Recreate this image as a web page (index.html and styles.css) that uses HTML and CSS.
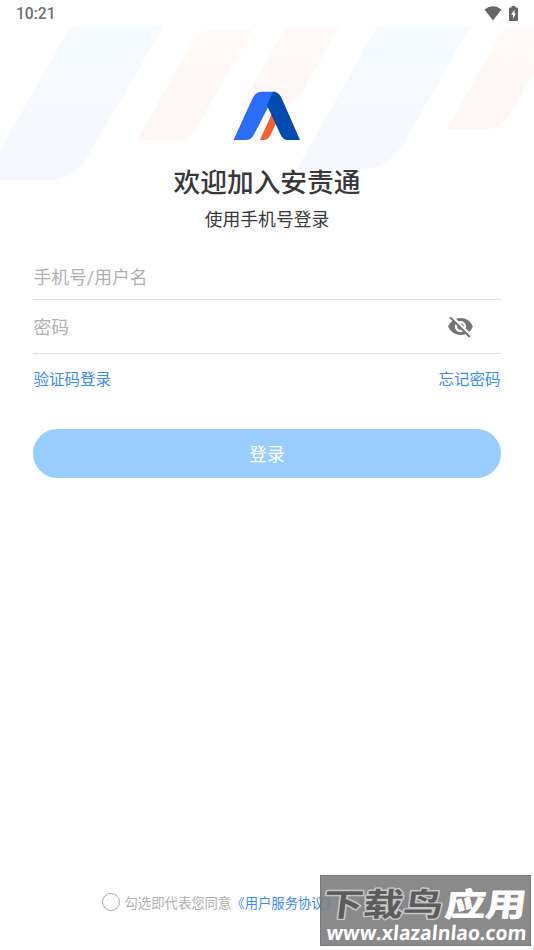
FILE: index.html
```html
<!DOCTYPE html>
<html lang="zh-CN">
<head>
<meta charset="utf-8">
<title>登录</title>
<link rel="stylesheet" href="styles.css">
</head>
<body>
<div class="screen">
  <svg class="backdrop" viewBox="0 0 534 190" aria-hidden="true">
    <defs>
      <linearGradient id="blue" x1="0" y1="0" x2="0" y2="1"><stop offset="0" stop-color="#f6fbff"/><stop offset=".45" stop-color="#f6faff"/><stop offset="1" stop-color="#f5f8ff"/></linearGradient>
      <linearGradient id="peach" x1="0" y1="0" x2="0" y2="1"><stop offset="0" stop-color="#fffaf7"/><stop offset="1" stop-color="#fff6f5"/></linearGradient>
    </defs>
    <path fill="url(#blue)" d="M70 27H163L88 156Q73 180 50 180H0V150Z"/>
    <path fill="url(#peach)" d="M213 30H252L198 126Q190 140 175 140H137L192 43Q199 30 213 30Z"/>
    <path fill="url(#peach)" d="M286 27H339L303 91Q294 107 279 107H240Z"/>
    <path fill="url(#blue)" d="M377 27H470L403 144Q388 169 360 169H297Z"/>
    <path fill="url(#peach)" d="M505 27H534V73L509 116Q502 129 484 129H447Z"/>
  </svg>

  <header class="status">
    <span class="clock">10:21</span>
    <span class="indicators">
      <svg width="18" height="15" viewBox="0 0 18 15"><path fill="#666" d="M.5 3.500Q9-3.200 17.500 3.500L9 14.400Z"/></svg>
      <svg width="9" height="16" viewBox="0 0 9 16"><path fill="#666" d="M2.600 0h3.800v1.600H8a1 1 0 0 1 1 1V14a1 1 0 0 1-1 1H1a1 1 0 0 1-1-1V2.600a1 1 0 0 1 1-1h1.600Z"/><path fill="#fff" d="M5.400 3.600 2.200 8.700H4v4l2.900-5.300H5.400Z"/></svg>
    </span>
  </header>

  <main class="login">
    <svg class="logo" width="68" height="50" viewBox="0 0 68 50">
      <path fill="#f55f2d" d="M47 24 37.500 44Q35 49 30.500 49H27L40 20Z"/>
      <path fill="#296dfa" d="M.5 49 19 8.500Q22.300 .8 29 .8H43L21 43.500Q18.500 49 12 49Z"/>
      <path fill="#024bb0" d="M40 .8Q46 .8 49 8L67 49H55Q50 49 47.500 43.500L34 14.500 40 .8Z"/>
    </svg>
    <h1 class="title">欢迎加入安责通</h1>
    <p class="subtitle">使用手机号登录</p>

    <form class="form">
      <div class="field field-user"><span class="placeholder">手机号/用户名</span></div>
      <div class="field field-password">
        <span class="placeholder">密码</span>
        <svg class="eye" width="27" height="27" viewBox="0 0 24 24"><path fill="#757575" d="M12 7c2.760 0 5 2.240 5 5 0 .65-.13 1.260-.36 1.830l2.920 2.920c1.510-1.260 2.700-2.890 3.430-4.750-1.730-4.390-6-7.500-11-7.500-1.400 0-2.740.25-3.980.7l2.160 2.160C10.740 7.130 11.350 7 12 7zM2 4.270l2.280 2.280.46.46C3.080 8.300 1.780 10.020 1 12c1.730 4.390 6 7.500 11 7.500 1.550 0 3.030-.3 4.380-.84l.42.42L19.730 22 21 20.730 3.270 3 2 4.270zM7.530 9.800l1.550 1.550c-.05.21-.08.43-.08.65 0 1.660 1.340 3 3 3 .22 0 .44-.03.65-.08l1.550 1.550c-.67.33-1.410.53-2.200.53-2.760 0-5-2.240-5-5 0-.79.2-1.530.53-2.200zm4.310-.78 3.150 3.150.02-.16c0-1.660-1.340-3-3-3l-.17.01z"/></svg>
      </div>
      <div class="links"><a>验证码登录</a><a>忘记密码</a></div>
      <button class="submit" type="button">登录</button>
    </form>
  </main>

  <footer class="agreement">
    <span class="radio"></span>
    <span>勾选即代表您同意<a>《用户服务协议》</a>和<a>《隐私政策》</a></span>
  </footer>

  <div class="watermark">
    <svg width="211" height="71" viewBox="0 0 211 71">
      <g class="wm-name" transform="translate(0 40.500) skewX(-7) scale(1 .89)">
        <text class="wm-dark" x="2" y="0" textLength="120" lengthAdjust="spacingAndGlyphs">下载鸟</text>
        <text class="wm-light" x="124" y="0" textLength="81" lengthAdjust="spacingAndGlyphs">应用</text>
      </g>
      <text class="wm-url" transform="translate(6 65) skewX(-5)" textLength="200" lengthAdjust="spacingAndGlyphs">www.xlazalnlao.com</text>
    </svg>
  </div>
</div>
</body>
</html>
```

FILE: styles.css
```css
* { box-sizing: border-box; }
body {
  margin: 0;
  background: #fff;
  font-family: Roboto, "Noto Sans CJK SC", sans-serif;
  color: #383838;
}
.screen {
  position: relative;
  display: flex;
  flex-direction: column;
  height: 950px;
  overflow: hidden;
}
.backdrop {
  position: absolute;
  top: 0;
  left: 0;
  width: 534px;
  height: 190px;
}
.status {
  position: relative;
  display: flex;
  justify-content: space-between;
  align-items: center;
  height: 27px;
  padding: 0 16px;
}
.clock {
  padding-top: 2px;
  font-size: 15.6px;
  font-weight: 500;
  line-height: 27px;
  color: #707070;
}
.indicators {
  display: flex;
  align-items: center;
  gap: 7px;
  height: 26px;
}
.login {
  position: relative;
  display: flex;
  flex-direction: column;
  align-items: center;
  flex: 1;
  padding: 64px 33px 0;
}
.logo { display: block; }
.title {
  margin: 22px 0 0;
  font-size: 26.7px;
  font-weight: 500;
  line-height: 40px;
}
.subtitle {
  margin: 4px 0 0;
  font-size: 17.8px;
  line-height: 26px;
}
.form { width: 100%; }
.field {
  display: flex;
  align-items: center;
  justify-content: space-between;
  border-bottom: 1px solid #e1e1e8;
  font-size: 17.8px;
}
.field-user { height: 47px; margin-top: 20px; }
.field-password { height: 54px; padding-right: 27px; }
.placeholder { padding: 0 0 1px .5px; color: #b0b0b0; }
.links {
  display: flex;
  justify-content: space-between;
  padding: 0 .5px;
  margin-top: 14px;
  font-size: 15.5px;
  line-height: 24px;
}
a { color: #3a8cf5; }
.submit {
  display: block;
  width: 100%;
  height: 49px;
  margin-top: 37px;
  padding: 0 0 1px;
  border: 0;
  border-radius: 25px;
  background: #99cdff;
  color: #fff;
  font: inherit;
  font-size: 17.8px;
}
.agreement {
  position: relative;
  display: flex;
  justify-content: center;
  align-items: center;
  gap: 5px;
  height: 24px;
  margin-bottom: 36px;
  padding-right: 1px;
  font-size: 13.35px;
  color: #b0b0b0;
}
.radio {
  width: 18px;
  height: 18px;
  border: 1px solid #aaa;
  border-radius: 50%;
}
.watermark {
  position: absolute;
  left: 320px;
  top: 875px;
  width: 211px;
  height: 71px;
  background: rgba(122, 122, 122, 0.88);
  border: 1px solid #777;
}
.watermark svg { display: block; margin: -1px; }
.wm-name {
  font-family: "Noto Sans CJK SC", sans-serif;
  font-size: 36px;
  font-weight: 700;
  paint-order: stroke;
  stroke-linejoin: round;
}
.wm-dark { fill: #5c5c5c; stroke: #c8c8c8; stroke-width: 3px; }
.wm-light { fill: #fff; stroke: #fff; stroke-width: 1px; }
.wm-url {
  font-family: "Open Sans", sans-serif;
  font-size: 20px;
  font-weight: 700;
  fill: #fff;
}
```
